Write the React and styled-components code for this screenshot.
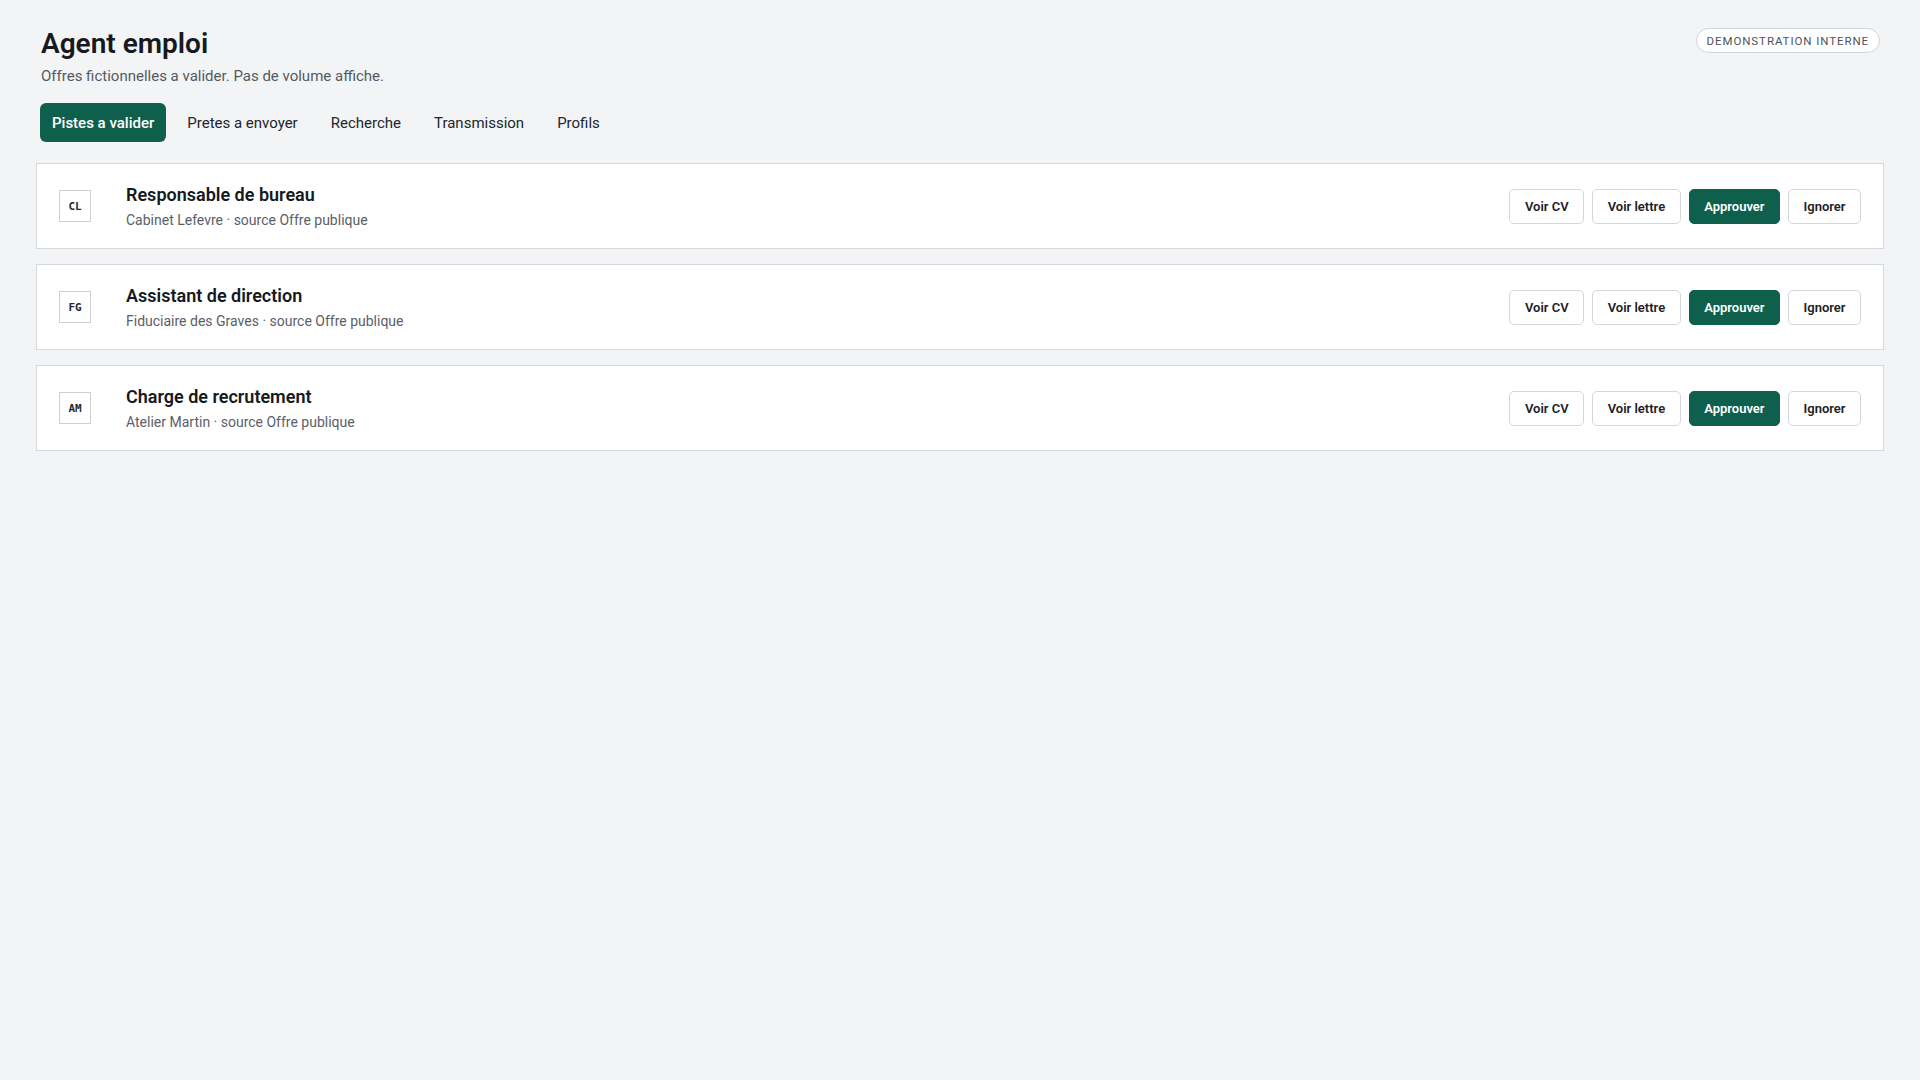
import React, { useState } from "react";
import styled, { createGlobalStyle } from "styled-components";

const GREEN = "#0e604d";

const GlobalStyle = createGlobalStyle`
  body {
    margin: 0;
    background: #f3f4f6;
    color: #1b1f24;
    font-family: Roboto, "Noto Sans", Arial, sans-serif;
  }
`;

const leads = [
  {
    id: 1,
    initials: "CL",
    title: "Responsable de bureau",
    company: "Cabinet Lefevre",
    source: "Offre publique",
  },
  {
    id: 2,
    initials: "FG",
    title: "Assistant de direction",
    company: "Fiduciaire des Graves",
    source: "Offre publique",
  },
  {
    id: 3,
    initials: "AM",
    title: "Charge de recrutement",
    company: "Atelier Martin",
    source: "Offre publique",
  },
];

const tabs = [
  "Pistes a valider",
  "Pretes a envoyer",
  "Recherche",
  "Transmission",
  "Profils",
];

const App = () => {
  const [active, setActive] = useState(0);

  return (
    <>
      <GlobalStyle />
      <Page>
        <Header>
          <div>
            <Title>Agent emploi</Title>
            <Subtitle>Offres fictionnelles a valider. Pas de volume affiche.</Subtitle>
          </div>
          <Badge>Demonstration interne</Badge>
        </Header>

        <Tabs>
          {tabs.map((label, i) => (
            <Tab key={label} $active={i === active} onClick={() => setActive(i)}>
              {label}
            </Tab>
          ))}
        </Tabs>

        <List>
          {leads.map((lead) => (
            <Card key={lead.id}>
              <Avatar>{lead.initials}</Avatar>
              <Info>
                <LeadTitle>{lead.title}</LeadTitle>
                <LeadMeta>
                  {lead.company} · source {lead.source}
                </LeadMeta>
              </Info>
              <Actions>
                <Button>Voir CV</Button>
                <Button>Voir lettre</Button>
                <Button $primary>Approuver</Button>
                <Button>Ignorer</Button>
              </Actions>
            </Card>
          ))}
        </List>
      </Page>
    </>
  );
};

export default App;

const Page = styled.main`
  padding: 27px 36px 40px;
`;

const Header = styled.header`
  display: flex;
  justify-content: space-between;
  align-items: flex-start;
  padding: 0 4px 0 5px;
`;

const Title = styled.h1`
  margin: 0;
  font-size: 28px;
  line-height: 34px;
  font-weight: 600;
  color: #16191d;
`;

const Subtitle = styled.p`
  margin: 5px 0 0;
  font-size: 15px;
  line-height: 20px;
  color: #545a61;
`;

const Badge = styled.span`
  margin-top: 1px;
  height: 25px;
  box-sizing: border-box;
  display: inline-flex;
  align-items: center;
  padding: 0 10px;
  border: 1px solid #d0d4da;
  border-radius: 999px;
  background: #fff;
  color: #4d535a;
  font-size: 11.5px;
  letter-spacing: 0.08em;
  text-transform: uppercase;
`;

const Tabs = styled.nav`
  display: flex;
  gap: 9px;
  margin-top: 17px;
  padding: 0 4px;
`;

const Tab = styled.button`
  height: 39px;
  padding: 0 12px;
  border: none;
  border-radius: 6px;
  background: ${(p) => (p.$active ? GREEN : "transparent")};
  color: ${(p) => (p.$active ? "#fff" : "#22262b")};
  font-family: inherit;
  font-size: 15px;
  font-weight: ${(p) => (p.$active ? 500 : 400)};
  cursor: pointer;
`;

const List = styled.section`
  display: flex;
  flex-direction: column;
  gap: 15px;
  margin-top: 21px;
`;

const Card = styled.article`
  display: flex;
  align-items: center;
  height: 86px;
  box-sizing: border-box;
  padding: 0 22px;
  background: #fff;
  border: 1px solid #d5d8dd;
`;

const Avatar = styled.div`
  width: 32px;
  height: 32px;
  box-sizing: border-box;
  flex: none;
  display: flex;
  align-items: center;
  justify-content: center;
  border: 1px solid #cdd1d6;
  background: #fff;
  font-family: "DejaVu Sans Mono", "Liberation Mono", monospace;
  font-size: 11px;
  font-weight: 700;
  color: #25292e;
`;

const Info = styled.div`
  flex: 1;
  margin-left: 35px;
`;

const LeadTitle = styled.h2`
  margin: 0;
  font-size: 18px;
  line-height: 24px;
  font-weight: 600;
  color: #16191d;
`;

const LeadMeta = styled.p`
  margin: 3px 0 0;
  font-size: 14px;
  line-height: 20px;
  color: #5a6068;
`;

const Actions = styled.div`
  display: flex;
  gap: 8px;
`;

const Button = styled.button`
  height: 35px;
  padding: 0 14.5px;
  border: 1px solid ${(p) => (p.$primary ? GREEN : "#d3d7dc")};
  border-radius: 5px;
  background: ${(p) => (p.$primary ? GREEN : "#fff")};
  color: ${(p) => (p.$primary ? "#fff" : "#1d2126")};
  font-family: inherit;
  font-size: 13px;
  font-weight: 600;
  cursor: pointer;
`;
